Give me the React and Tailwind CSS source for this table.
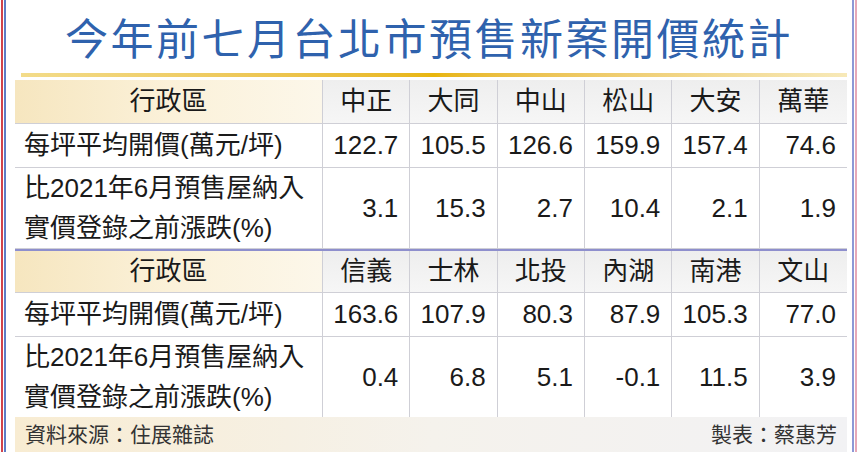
import React from "react";

const rows = [
  {
    names: ["中正", "大同", "中山", "松山", "大安", "萬華"],
    price: ["122.7", "105.5", "126.6", "159.9", "157.4", "74.6"],
    change: ["3.1", "15.3", "2.7", "10.4", "2.1", "1.9"],
    tall: "h-[81px]",
    head: "h-[44px]",
  },
  {
    names: ["信義", "士林", "北投", "內湖", "南港", "文山"],
    price: ["163.6", "107.9", "80.3", "87.9", "105.3", "77.0"],
    change: ["0.4", "6.8", "5.1", "-0.1", "11.5", "3.9"],
    tall: "h-[80px]",
    head: "h-[42px]",
  },
];

const grid = "grid grid-cols-[308px_repeat(6,1fr)]";
const cell = "border-r border-b border-[#cfcfd6] last:border-r-0";

function Section({ data }) {
  return (
    <>
      <div className={`${grid} ${data.head}`}>
        <div className={`${cell} flex items-center justify-center bg-gradient-to-r from-[#f6e6bf] via-[#fbf1d9] to-[#fcf7ea]`}>
          行政區
        </div>
        {data.names.map((n) => (
          <div key={n} className={`${cell} flex items-center justify-center bg-gradient-to-b from-[#eeeeee] to-[#f6f6f6]`}>
            {n}
          </div>
        ))}
      </div>
      <div className={`${grid} h-[44px]`}>
        <div className={`${cell} flex items-center pl-[9px]`}>每坪平均開價(萬元/坪)</div>
        {data.price.map((v, i) => (
          <div key={i} className={`${cell} flex items-center justify-end pr-[11px]`}>
            {v}
          </div>
        ))}
      </div>
      <div className={`${grid} ${data.tall}`}>
        <div className={`${cell} flex flex-col justify-center pl-[9px] leading-[40px]`}>
          <span>比2021年6月預售屋納入</span>
          <span>實價登錄之前漲跌(%)</span>
        </div>
        {data.change.map((v, i) => (
          <div key={i} className={`${cell} flex items-center justify-end pr-[11px]`}>
            {v}
          </div>
        ))}
      </div>
    </>
  );
}

export default function App() {
  return (
    <div className="w-[858px] h-[452px] bg-white flex overflow-hidden text-[#1a1a1a] font-['Liberation_Sans','Noto_Sans_CJK_TC',sans-serif]">
      <div className="w-px" />
      <div className="w-[2px] bg-[#d2434b]" />
      <div className="w-px" />
      <div className="w-[2px] bg-[#5d7cc6]" />
      <div className="flex-1 flex flex-col pl-[9px] pr-[5px]">
        <div className="h-[72px] flex items-center justify-center pr-[4px]">
          <h1 className="text-[43px] tracking-[2.5px] font-normal text-[#2f62ad] font-['Noto_Sans_CJK_TC',sans-serif] leading-none">
            今年前七月台北市預售新案開價統計
          </h1>
        </div>
        <div className="h-[4px] mt-px mb-[3px] ml-[6px] bg-gradient-to-r from-[#f3dc8a] via-[#e8b60c] to-[#f7e9b8]" />
        <div className="text-[26px]">
          <Section data={rows[0]} />
          <div className="h-[2px] bg-[#8e8fcd]" />
          <Section data={rows[1]} />
        </div>
        <div className="flex-1 flex items-center justify-between px-[10px] text-[21px] text-[#333] bg-gradient-to-r from-[#f8ecd2] via-[#f5f2ec] to-[#f2f2f4]">
          <span>資料來源：住展雜誌</span>
          <span>製表：蔡惠芳</span>
        </div>
      </div>
      <div className="w-[2px] bg-[#8c98d6]" />
      <div className="w-px" />
      <div className="w-[2px] bg-[#e6a8b8]" />
      <div className="w-px" />
    </div>
  );
}
